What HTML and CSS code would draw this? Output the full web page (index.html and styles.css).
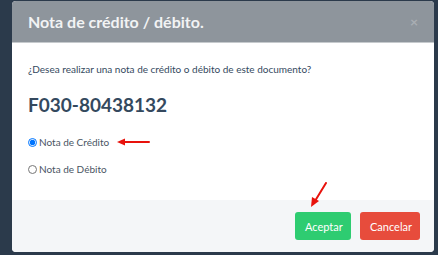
FILE: index.html
```html
<!DOCTYPE html>
<html lang="es">
  <head>
    <meta charset="UTF-8" />
    <meta name="viewport" content="width=device-width, initial-scale=1.0" />
    <title>Nota de crédito / débito</title>
    <link rel="stylesheet" href="styles.css">
  </head>
  <body>
    <div class="backdrop">
      <div class="modal">
        <div class="modal-header">
          <h4 class="modal-title">Nota de crédito / débito.</h4>
          <span class="close">&times;</span>
        </div>
        <div class="modal-body">
          <p class="question">¿Desea realizar una nota de crédito o débito de este documento?</p>
          <h2 class="doc-number">F030-80438132</h2>
          <label class="option">
            <input type="radio" name="tipo" checked>
            <span>Nota de Crédito</span>
            <svg class="arrow-left" width="34" height="8" viewBox="0 0 34 8">
              <path d="M6 4 L32 4" stroke="#e8120c" stroke-width="2" stroke-linecap="round" />
              <path d="M0 4 L8 0.5 L8 7.5 Z" fill="#e8120c" />
            </svg>
          </label>
          <label class="option">
            <input type="radio" name="tipo">
            <span>Nota de Débito</span>
          </label>
        </div>
        <div class="modal-footer">
          <svg class="arrow-down" width="20" height="26" viewBox="0 0 20 26">
            <path d="M17 1 L6 19" stroke="#e8120c" stroke-width="2" stroke-linecap="round" />
            <path d="M2 25 L3 15 L10 19 Z" fill="#e8120c" />
          </svg>
          <button class="btn btn-success">Aceptar</button>
          <button class="btn btn-danger">Cancelar</button>
        </div>
      </div>
    </div>
  </body>
</html>
```

FILE: styles.css
```css
html,
body {
  margin: 0;
  padding: 0;
}

body {
  font-family: Lato, "Open Sans", sans-serif;
  background-color: #2b3a4b;
  width: 438px;
  height: 255px;
  overflow: hidden;
}

.backdrop {
  padding: 1px 4px 0 12px;
}

.modal {
  width: 422px;
  height: 251px;
  background-color: #fff;
  border-radius: 4px;
  overflow: hidden;
  display: flex;
  flex-direction: column;
}

.modal-header {
  height: 42px;
  background-color: #8e959c;
  border-bottom: 1px solid #c6cacd;
  display: flex;
  align-items: center;
  justify-content: space-between;
  padding: 0 16px;
  box-sizing: border-box;
}

.modal-title {
  margin: 0;
  color: #f2f3f4;
  font-size: 16px;
  font-weight: 700;
}

.close {
  color: #a9aeb3;
  font-size: 14px;
  font-weight: 700;
}

.modal-body {
  height: 157px;
  padding: 0 16px;
  box-sizing: border-box;
}

.question {
  margin: 20px 0 0;
  font-size: 10px;
  color: #34495e;
}

.doc-number {
  margin: 18px 0 19px;
  font-size: 19px;
  font-weight: 700;
  color: #34495e;
}

.option {
  display: flex;
  align-items: center;
  font-size: 10px;
  color: #4a5563;
  height: 14px;
  margin-bottom: 13px;
}

.option input {
  margin: 0 2px 0 0;
  width: 9px;
  height: 9px;
}

.arrow-left {
  margin-left: 8px;
}

.modal-footer {
  flex: 1;
  background-color: #f4f6f8;
  display: flex;
  justify-content: flex-end;
  align-items: flex-end;
  gap: 9px;
  padding: 0 14px 12px;
  position: relative;
}

.arrow-down {
  position: absolute;
  left: 297px;
  top: -18px;
}

.btn {
  font-family: Lato, sans-serif;
  font-size: 11px;
  color: #fff;
  border: none;
  border-radius: 3px;
  height: 28px;
  padding: 0 10px;
}

.btn-success {
  background-color: #2ecc71;
  width: 56px;
}

.btn-danger {
  background-color: #e74c3c;
  width: 60px;
}
```
